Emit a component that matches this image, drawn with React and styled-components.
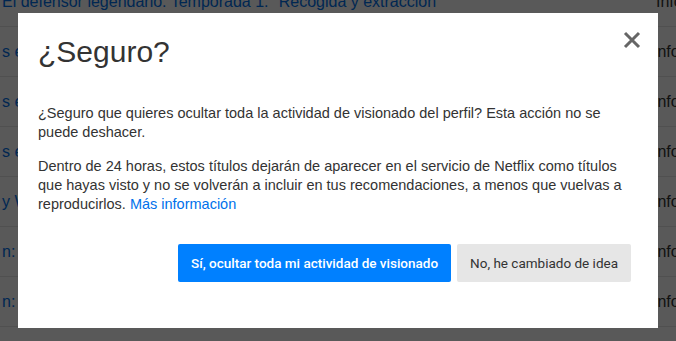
import React from "react";
import styled, { createGlobalStyle } from "styled-components";

//PAGE CONSTANTS
const ACTIVITY_ROWS = [
  'El defensor legendario: Temporada 1: "Recogida y extracción"',
  's en la noche: Temporada 2: "El regreso"',
  's en la noche: Temporada 2: "La prueba"',
  's en la noche: Temporada 2: "El pacto"',
  "y Wood Jr.: Father Figure",
  'n: Temporada 1: "Mar abierto"',
  'n: Temporada 1: "Despertar"',
  'n: Temporada 1: "Órbita"',
];

const GlobalStyle = createGlobalStyle`
  html, body {
    margin: 0;
    padding: 0;
    background: #ffffff;
    overflow: hidden;
  }
  body {
    font-family: "Liberation Sans", Arial, sans-serif;
  }
`;

//BACKGROUND LIST STYLES
const ActivityList = styled.div`
  margin-top: -23px;
  width: 900px;
`;

const ActivityRow = styled.div`
  display: grid;
  grid-template-columns: 653px 1fr;
  align-items: center;
  height: 49px;
  border-bottom: 1px solid #e5e5e5;
  font-size: 16px;
`;

const RowTitle = styled.a`
  padding-left: 2px;
  color: #0071eb;
  text-decoration: none;
  white-space: nowrap;
  overflow: hidden;
`;

const RowReport = styled.a`
  color: #333333;
  text-decoration: none;
  white-space: nowrap;
  padding-left: ${(p) => (p.$first ? "3px" : "0")};
`;

//MODAL STYLES
const Overlay = styled.div`
  position: fixed;
  inset: 0;
  background: rgba(0, 0, 0, 0.65);
  display: flex;
  align-items: center;
  justify-content: center;
`;

const Modal = styled.div`
  position: relative;
  width: 640px;
  height: 315px;
  box-sizing: border-box;
  background: #ffffff;
  padding: 21px 27px 0 20px;
  color: #333333;
`;

const Title = styled.h1`
  margin: 0 0 34px;
  font-size: 30px;
  line-height: 36px;
  font-weight: 400;
  color: #333333;
`;

const CloseButton = styled.button`
  position: absolute;
  top: 18px;
  right: 17px;
  width: 18px;
  height: 18px;
  padding: 0;
  border: 0;
  background: none;
  cursor: pointer;
`;

const Text = styled.p`
  margin: 0 0 15px;
  font-size: 14.5px;
  line-height: 19px;
  color: #333333;
`;

const InfoLink = styled.a`
  color: #0071eb;
  text-decoration: none;
`;

const Actions = styled.div`
  display: flex;
  justify-content: flex-end;
  gap: 6px;
  margin-top: 30px;
`;

const ActionButton = styled.button`
  height: 38px;
  padding: 0 13px;
  border: 0;
  border-radius: 2px;
  font-family: Roboto, "Liberation Sans", sans-serif;
  font-size: 13.5px;
  font-weight: ${(p) => (p.$primary ? 500 : 400)};
  color: ${(p) => (p.$primary ? "#ffffff" : "#333333")};
  background: ${(p) => (p.$primary ? "#0080ff" : "#e6e6e6")};
  cursor: pointer;
`;

function CloseIcon() {
  return (
    <svg width="18" height="18" viewBox="0 0 18 18">
      <path
        d="M2 2 L16 16 M16 2 L2 16"
        stroke="#666666"
        strokeWidth="3"
        strokeLinecap="butt"
      />
    </svg>
  );
}

function App() {
  return (
    <>
      <GlobalStyle />
      <ActivityList>
        {ACTIVITY_ROWS.map((title, i) => (
          <ActivityRow key={title}>
            <RowTitle href="#">{title}</RowTitle>
            <RowReport href="#" $first={i === 0}>
              Informar de un problema
            </RowReport>
          </ActivityRow>
        ))}
      </ActivityList>
      <Overlay>
        <Modal>
          <CloseButton aria-label="Cerrar">
            <CloseIcon />
          </CloseButton>
          <Title>¿Seguro?</Title>
          <Text>
            ¿Seguro que quieres ocultar toda la actividad de visionado del
            perfil? Esta acción no se puede deshacer.
          </Text>
          <Text>
            Dentro de 24 horas, estos títulos dejarán de aparecer en el servicio
            de Netflix como títulos que hayas visto y no se volverán a incluir en
            tus recomendaciones, a menos que vuelvas a reproducirlos.{" "}
            <InfoLink href="#">Más información</InfoLink>
          </Text>
          <Actions>
            <ActionButton $primary>
              Sí, ocultar toda mi actividad de visionado
            </ActionButton>
            <ActionButton>No, he cambiado de idea</ActionButton>
          </Actions>
        </Modal>
      </Overlay>
    </>
  );
}

export default App;
